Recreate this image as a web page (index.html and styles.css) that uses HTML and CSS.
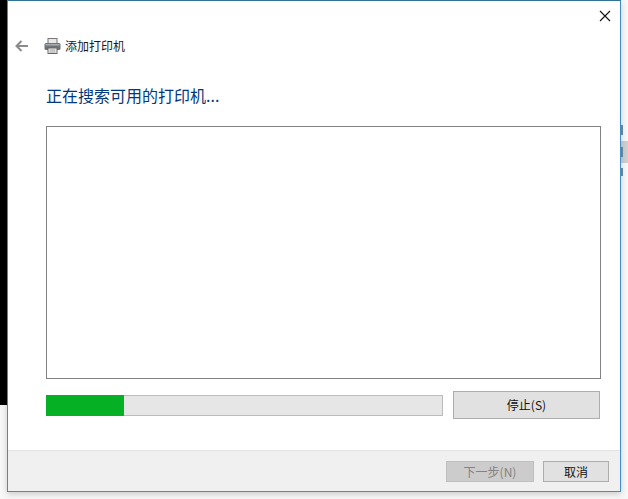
FILE: index.html
```html
<!DOCTYPE html>
<html lang="zh-CN">
<head>
<meta charset="utf-8">
<title>添加打印机</title>
<link rel="stylesheet" href="styles.css">
</head>
<body>
<div class="desktop">
  <div class="bg-black"></div>
  <div class="bg-gray"></div>
  <div class="bg-dash bg-dash-1"></div>
  <div class="bg-dash bg-dash-2"></div>
  <div class="bg-dash bg-dash-3"></div>
  <div class="window">
    <div class="titlebar">
      <svg class="close" width="12" height="12" viewBox="0 0 12 12"><path d="M1 1L11 11M11 1L1 11" stroke="#111" stroke-width="1.1" fill="none"/></svg>
    </div>
    <div class="nav">
      <svg class="back" width="14" height="12" viewBox="0 0 14 12"><path d="M13 6H2M6.5 1L1.5 6L6.5 11" stroke="#8a8a8a" stroke-width="2" fill="none"/></svg>
      <svg class="printer" width="17" height="16" viewBox="0 0 17 16">
        <rect x="4" y="0.5" width="9" height="5" fill="#e8e8e8" stroke="#777"/>
        <rect x="0.5" y="5" width="16" height="7" rx="1.5" fill="#6f7479"/>
        <rect x="1.5" y="6" width="14" height="1.5" fill="#a9adb1"/>
        <rect x="4" y="10" width="9" height="5.5" fill="#f4f4f4" stroke="#666"/>
        <path d="M5.5 12H11.5M5.5 14H11.5" stroke="#9a9a9a"/>
      </svg>
      <span class="nav-title">添加打印机</span>
    </div>
    <div class="content">
      <h1 class="heading">正在搜索可用的打印机...</h1>
      <div class="listbox"></div>
      <div class="progress-row">
        <div class="progress"><div class="progress-fill"></div></div>
        <button class="btn btn-stop">停止(S)</button>
      </div>
    </div>
    <div class="footer">
      <button class="btn btn-next" disabled>下一步(N)</button>
      <button class="btn btn-cancel">取消</button>
    </div>
  </div>
</div>
</body>
</html>
```
FILE: styles.css
```css
* { box-sizing: border-box; }
html, body { margin: 0; padding: 0; background: #fff; }
body { font-family: "Noto Sans CJK SC", "Liberation Sans", sans-serif; overflow: hidden; }
.desktop { position: relative; width: 628px; height: 499px; background: #f7f7f7; overflow: hidden; }
.bg-black { position: absolute; left: 0; top: 0; width: 8px; height: 405px; background: #000; }
.bg-gray { position: absolute; left: 621px; top: 141px; width: 7px; height: 22px; background: #cfcfcf; }
.bg-dash { position: absolute; left: 621px; width: 2px; background: #6f8ba3; }
.bg-dash-1 { top: 125px; height: 10px; }
.bg-dash-2 { top: 147px; height: 10px; }
.bg-dash-3 { top: 168px; height: 8px; }
.window {
  position: absolute; left: 7px; top: 0; width: 614px; height: 492px;
  background: #fff; border: 1px solid #3f8fc4; border-top-color: #2f7397;
  box-shadow: 0 2px 6px rgba(0,0,0,.18);
  display: flex; flex-direction: column;
}
.titlebar { height: 29px; display: flex; justify-content: flex-end; align-items: flex-start; padding: 9px 9px 0 0; }
.close { display: block; }
.nav { height: 32px; display: flex; align-items: center; padding-left: 7px; }
.back { margin-right: 15px; }
.printer { margin-right: 4px; }
.nav-title { font-size: 12px; color: #1a1a1a; line-height: 16px; }
.content { flex: 1; padding: 0 19px 0 38px; display: flex; flex-direction: column; }
.heading { margin: 22px 0 0; height: 22px; font-size: 16px; line-height: 22px; font-weight: 400; color: #003a7d; white-space: nowrap; }
.listbox { margin-top: 20px; height: 253px; border: 1px solid #828282; background: #fff; }
.progress-row { margin-top: 12px; display: flex; align-items: center; gap: 10px; }
.progress { width: 397px; height: 21px; background: #e6e6e6; border: 1px solid #bcbcbc; }
.progress-fill { width: 78px; height: 21px; margin: -1px 0 0 -1px; background: #06b025; }
.btn {
  font-family: inherit; font-size: 12px; line-height: 16px; padding: 0; color: #111;
  background: #e1e1e1; border: 1px solid #adadad; border-radius: 0;
}
.btn-stop { width: 147px; height: 28px; }
.footer {
  height: 41px; background: #f0f0f0; border-top: 1px solid #e3e3e3;
  display: flex; justify-content: flex-end; align-items: flex-start; gap: 9px;
  padding: 10px 11px 0 0;
}
.btn-next { width: 88px; height: 21px; background: #cccccc; border-color: #bfbfbf; color: #838383; }
.btn-cancel { width: 66px; height: 21px; }
```
